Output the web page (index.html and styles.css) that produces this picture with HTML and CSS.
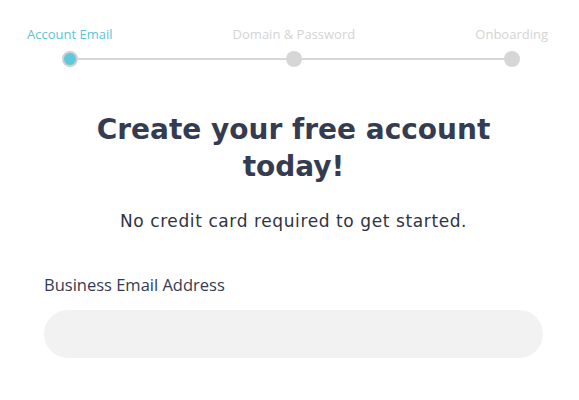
FILE: index.html
```html
<!DOCTYPE html>
<html lang="en">
<head>
  <meta charset="UTF-8" />
  <meta name="viewport" content="width=device-width, initial-scale=1.0" />
  <title>Create your free account</title>
  <link rel="stylesheet" href="styles.css">
</head>
<body>
  <div class="steps">
    <div class="step active">
      <span class="step-label">Account Email</span>
      <span class="step-dot"></span>
    </div>
    <div class="step">
      <span class="step-label">Domain &amp; Password</span>
      <span class="step-dot"></span>
    </div>
    <div class="step">
      <span class="step-label">Onboarding</span>
      <span class="step-dot"></span>
    </div>
  </div>

  <main class="content">
    <h1 class="title">Create your free account today!</h1>
    <p class="subtitle">No credit card required to get started.</p>

    <form class="signup">
      <label class="field-label" for="email">Business Email Address</label>
      <input class="field-input" type="email" id="email" />
    </form>
  </main>
</body>
</html>
```

FILE: styles.css
```css
body { margin: 0; font-family: "Open Sans", sans-serif; color: #353b50; background: #fff; }

.steps { position: relative; display: flex; justify-content: space-between; margin: 0 31px 0 27px; padding-top: 26px; }
.steps::before { content: ""; position: absolute; left: 43px; right: 36px; top: 58px; height: 2px; background: #d6d6d6; }
.step { position: relative; display: flex; flex-direction: column; align-items: center; }
.step-label { font-size: 13px; line-height: 17px; color: #d4d4d4; white-space: nowrap; }
.step-dot { width: 16px; height: 16px; margin-top: 8px; border-radius: 50%; background: #d6d6d6; }
.step.active .step-label { color: #5cc4d8; }
.step.active .step-dot { width: 12px; height: 12px; border: 2px solid #cfcfcf; background: #5ec8dc; }

.content { margin: 0 36px 0 44px; }
.title { margin: 44px 40px 0; font-family: "DejaVu Sans", sans-serif; font-size: 28px; font-weight: 700; line-height: 37px; text-align: center; color: #353b50; }
.subtitle { margin: 26px 0 0; font-family: "DejaVu Sans", sans-serif; font-size: 17px; letter-spacing: 0.6px; text-align: center; color: #2f3342; }

.signup { margin-top: 44px; }
.field-label { display: block; font-size: 16.5px; line-height: 20px; color: #353b50; }
.field-input { display: block; box-sizing: border-box; width: 100%; height: 48px; margin-top: 15px; border: none; border-radius: 24px; background: #f2f2f2; padding: 0 24px; font: inherit; }
```
